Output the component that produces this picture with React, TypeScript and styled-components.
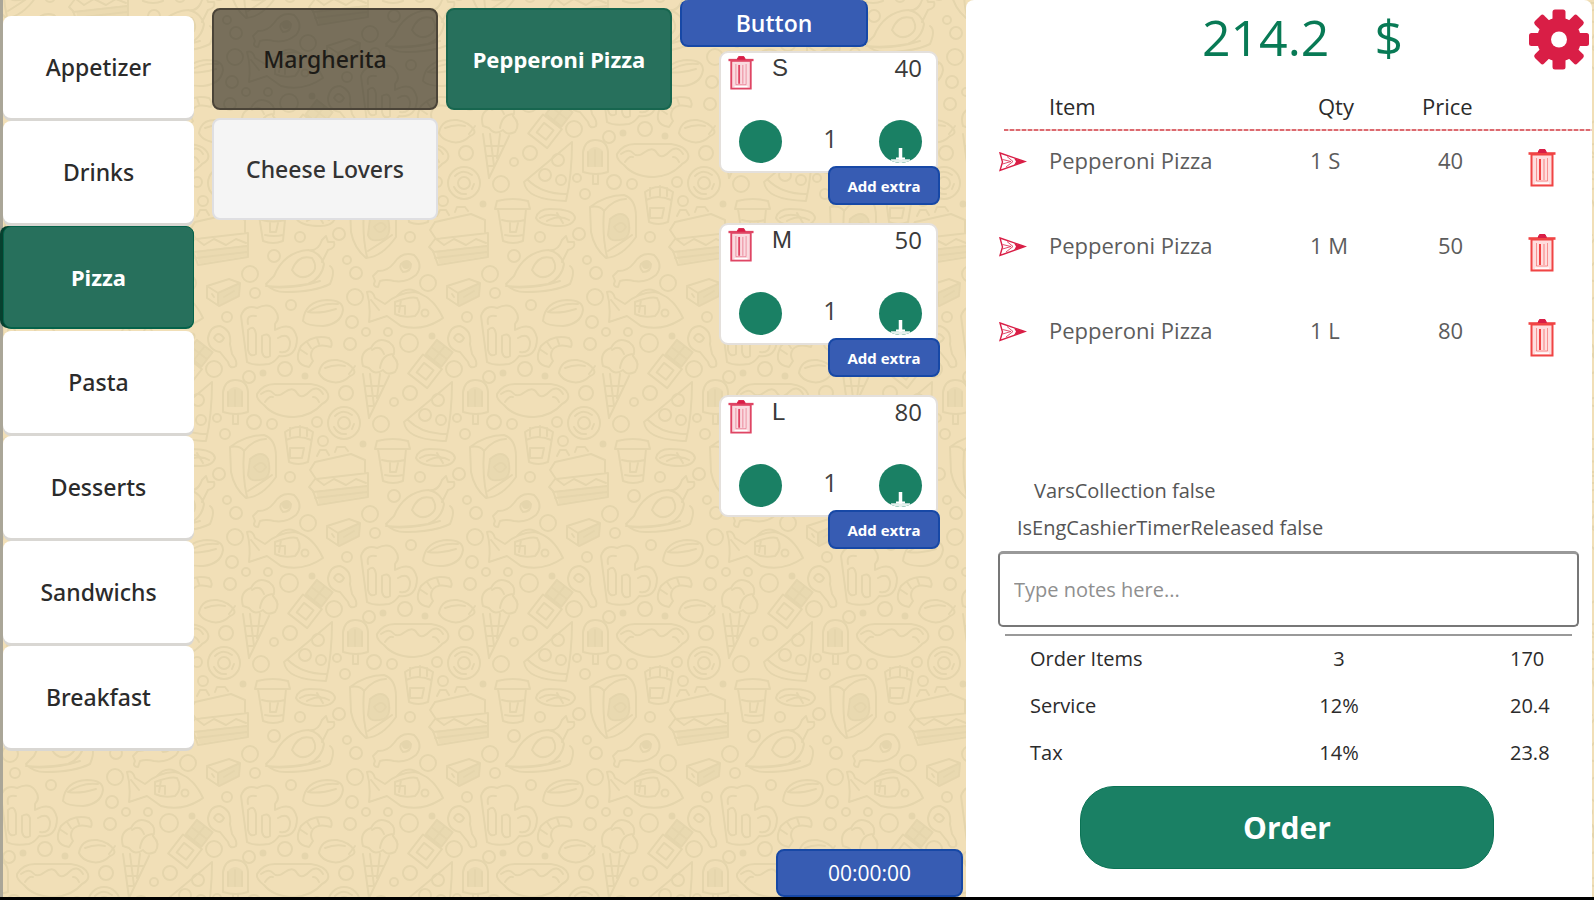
import React, { useState } from "react";
import styled, { createGlobalStyle, css } from "styled-components";

const sans = `"Open Sans", "Noto Sans", sans-serif`;
const menuFont = `"Noto Sans", "Open Sans", sans-serif`;

const colors = {
  sand: "#f1dfb7",
  doodle: "#e5d5ac",
  green: "#1a8064",
  greenDark: "#27705c",
  greenEdge: "#04624a",
  blue: "#375cb3",
  blueEdge: "#1748a6",
  crimson: "#d91e46",
  red: "#f04444",
  text: "#2b2b2b",
};

const GlobalStyle = createGlobalStyle`
  * { box-sizing: border-box; }
  body { margin: 0; background: #000; font-family: ${sans}; color: ${colors.text}; }
  button, input { font-family: inherit; }
  button { cursor: pointer; border: 0; padding: 0; }
`;

const Screen = styled.div`
  position: relative;
  display: grid;
  grid-template-columns: minmax(0, 963fr) minmax(0, 626fr);
  min-height: calc(100vh - 3px);
  padding: 0 2px 0 3px;
  background: linear-gradient(90deg, #aaa698 3px, ${colors.sand} 3px);
  overflow: hidden;
`;

const Backdrop = styled.svg`
  position: absolute;
  inset: 0;
  width: 100%;
  height: 100%;
  pointer-events: none;
`;

const Workspace = styled.div`
  position: relative;
  display: grid;
  grid-template-columns: 191px minmax(0, 1fr) 286px;
`;

const CategoryList = styled.nav`
  display: flex;
  flex-direction: column;
  gap: 3px;
  padding-top: 16px;
  font-family: ${menuFont};
`;

const CategoryButton = styled.button<{ $active: boolean }>`
  height: 102px;
  border-radius: 8px;
  background: #fff;
  box-shadow: 0 3px 0 #d9d7d3;
  color: ${colors.text};
  font-size: 23px;
  font-weight: 500;
  ${(p) =>
    p.$active &&
    css`
      background: ${colors.greenDark};
      border: 1px solid ${colors.greenEdge};
      box-shadow: -3px 0 0 #07402f, 0 1px 0 ${colors.greenEdge};
      color: #fff;
      font-size: 22px;
      font-weight: 700;
    `}
`;

const ProductGrid = styled.div`
  display: grid;
  grid-template-columns: 1fr 1fr;
  grid-auto-rows: 102px;
  gap: 8px;
  padding: 8px 8px 0 18px;
  font-family: ${menuFont};
`;

const ProductButton = styled.button<{ $look: "dim" | "active" | "plain" }>`
  border-radius: 8px;
  font-size: 23px;
  font-weight: 500;
  color: #333;
  background: #f5f5f5;
  border: 2px solid #dfdfe2;
  ${(p) =>
    p.$look === "dim" &&
    css`
      color: #1d1b17;
      background: rgba(0, 0, 0, 0.5);
      border-color: #4b4438;
    `}
  ${(p) =>
    p.$look === "active" &&
    css`
      color: #fff;
      font-size: 22px;
      font-weight: 700;
      background: ${colors.greenDark};
      border-color: #17664f;
    `}
`;

const VariantColumn = styled.section`
  display: flex;
  flex-direction: column;
  align-items: flex-start;
`;

const BlueButton = styled.button`
  border-radius: 8px;
  background: ${colors.blue};
  border: 2px solid ${colors.blueEdge};
  color: #fff;
  font-weight: 700;
`;

const TopButton = styled(BlueButton)`
  width: 188px;
  height: 47px;
  border-top: 0;
  font-size: 23px;
  font-weight: 600;
`;

const TimerButton = styled(BlueButton)`
  align-self: flex-end;
  width: 187px;
  height: 48px;
  margin: auto 3px 0 0;
  font-size: 21px;
  font-weight: 400;
`;

const VariantList = styled.div`
  display: flex;
  flex-direction: column;
  align-self: stretch;
  gap: 50px;
  margin: 4px 28px 0 39px;
`;

const VariantCard = styled.article`
  position: relative;
  display: flex;
  flex-direction: column;
  justify-content: space-between;
  height: 122px;
  padding: 3px 14px 8px 7px;
  border: 2px solid #e4e0dc;
  border-radius: 9px;
  background: #fff;
`;

const VariantHead = styled.div`
  display: flex;
  align-items: flex-start;
  font-size: 24px;
  line-height: 24px;
  color: #3a3a3a;
`;

const SizeName = styled.span`
  flex: 1;
  margin-left: 18px;
  font-family: "Liberation Sans", sans-serif;
`;

const Stepper = styled.div`
  display: flex;
  align-items: center;
  justify-content: space-between;
  padding-left: 11px;
`;

const StepButton = styled.button`
  width: 43px;
  height: 43px;
  border-radius: 50%;
  background: ${colors.green};
  overflow: hidden;
  svg { display: block; }
`;

const Count = styled.span`
  font-size: 25px;
  line-height: 32px;
  padding-bottom: 8px;
  color: #444;
`;

const ExtraButton = styled(BlueButton)`
  position: absolute;
  right: -4px;
  bottom: -34px;
  width: 112px;
  height: 39px;
  font-size: 15px;
`;

const IconButton = styled.button`
  display: inline-flex;
  background: none;
`;

const OrderPanel = styled.aside`
  position: relative;
  display: flex;
  flex-direction: column;
  border-radius: 8px 8px 0 0;
  background: #fff;
`;

const TotalBar = styled.header`
  display: flex;
  align-items: center;
  justify-content: flex-end;
  height: 78px;
  padding-right: 3px;
  color: #087a55;
  font-size: 50px;
  font-weight: 500;
  line-height: 64px;
`;

const Total = styled.div`
  display: flex;
  gap: 45px;
  margin: 0 126px 5px 0;
`;

const ItemTable = styled.table`
  width: calc(100% - 33px);
  margin-left: 33px;
  border-collapse: collapse;
  table-layout: fixed;
  font-size: 22px;
  line-height: 28px;

  th { padding: 0; font-weight: 500; text-align: left; vertical-align: top; }
  td { padding: 0; vertical-align: top; height: 85px; color: #5c5c5c; }
  thead tr {
    height: 53px;
    background: repeating-linear-gradient(90deg, #dd6a70 0 4px, #efc6c6 4px 6px) 5px 100% / 100% 2px no-repeat;
  }
  thead th { padding-top: 14px; color: ${colors.text}; }
  tbody td { padding-top: 15px; }
`;

const Col = styled.col<{ $w?: string }>`
  width: ${(p) => p.$w ?? "auto"};
`;

const QtyHead = styled.th`
  && { padding-left: 8px; }
`;

const PriceCell = styled.td`
  && { padding-left: 16px; }
`;

const IconCell = styled.td`
  && { padding-top: 18px; }
`;

const Flags = styled.div`
  margin-top: auto;
  font-size: 20px;
  line-height: 37px;
  color: #555;
`;

const Flag = styled.p<{ $indent: number }>`
  margin: 0;
  padding-left: ${(p) => p.$indent}px;
`;

const Notes = styled.input`
  display: block;
  height: 76px;
  margin: 5px 13px 0 32px;
  padding: 0 14px;
  border: 2px solid #777;
  border-top: 3px solid #999;
  border-radius: 5px;
  background: #fff;
  font-size: 20px;
  color: ${colors.text};
  &::placeholder { color: #8f8f8f; opacity: 1; }
`;

const Summary = styled.table`
  margin: 7px 20px 0 39px;
  width: calc(100% - 59px);
  border-top: 2px solid #999;
  border-collapse: collapse;
  table-layout: fixed;
  font-size: 20px;
  font-weight: 500;
  line-height: 28px;
  color: #2b2b2b;

  th, td { height: 47px; padding: 0; font-weight: inherit; text-align: left; }
  th { padding-left: 25px; }
  td:nth-child(2) { text-align: center; }
`;

const OrderButton = styled.button`
  align-self: center;
  width: 66%;
  height: 83px;
  margin: 10px 0 28px 16px;
  border-radius: 34px;
  background: ${colors.green};
  border: 1px solid #0b7355;
  color: #fff;
  font-size: 30px;
  font-weight: 700;
`;

const TrashIcon = ({ color, fill, width, height }: { color: string; fill: string; width: number; height: number }) => (
  <svg width={width} height={height} viewBox="0 0 28 38" preserveAspectRatio="none" aria-hidden="true">
    <path d="M3.5 5.5H24.5V36.5H3.5Z" fill={fill} stroke={color} strokeWidth="2" />
    <path d="M0.5 4.5H27.5" stroke={color} strokeWidth="2.6" />
    <path d="M10 3.5L11.5 0.5H17L18.5 3.5Z" fill={colors.crimson} stroke={colors.crimson} />
    <path d="M8.5 9V32H19.5V9" fill="none" stroke={color} strokeWidth="1" opacity="0.5" />
    <path d="M12 10V31" stroke={color} strokeWidth="2" />
    <path d="M16 10V31" stroke={color} strokeWidth="1" opacity="0.6" />
    <path d="M7 34.2H21" stroke="#fff" strokeWidth="1.4" />
  </svg>
);

const ArrowIcon = () => (
  <svg width="28" height="20" viewBox="0 0 28 20" aria-hidden="true">
    <path d="M1 1L26 9.5L1 18.5L3.5 10Z" fill="#fff" stroke={colors.crimson} strokeWidth="1.4" />
    <path d="M3.5 7.5L12 9.5L3.5 12M8 4.5L14 9.5L7 15" fill="none" stroke={colors.crimson} strokeWidth="1" opacity="0.8" />
    <path d="M15 6.3L26 9.5L15 13.2L17 9.5Z" fill={colors.crimson} />
  </svg>
);

const GearIcon = () => (
  <svg width="60" height="61" viewBox="-30 -30.5 60 61" aria-hidden="true">
    <g fill={colors.crimson}>
      {[0, 45, 90, 135].map((a) => (
        <rect key={a} x="-6.5" y="-30" width="13" height="60" rx="2.5" transform={`rotate(${a})`} />
      ))}
      <circle r="22" />
    </g>
    <circle r="8" fill="#fff" />
  </svg>
);

const PlusGlyph = () => (
  <svg width="43" height="43" viewBox="0 0 43 43" aria-hidden="true">
    <path d="M21.5 28V43" stroke="#fff" strokeWidth="3.5" />
    <path d="M12 41H31" stroke="#e6f1ee" strokeWidth="3.5" />
    <path d="M17 38.5H26" stroke="#fff" strokeWidth="2" />
  </svg>
);

const rings: [number, number, number][] = [
  [50, 54, 8], [155, 77, 8], [228, 63, 8], [156, 53, 6], [55, 73, 5], [91, 85, 5], [27, 97, 5],
  [152, 102, 6], [14, 149, 8], [85, 149, 7], [49, 157, 6], [146, 173, 7], [209, 123, 9], [210, 173, 7],
  [181, 204, 8], [54, 202, 7], [72, 204, 5], [25, 214, 5], [17, 198, 4], [117, 202, 5], [123, 221, 5],
  [194, 182, 4], [100, 17, 5], [139, 14, 6], [210, 17, 5], [74, 36, 6], [147, 40, 4], [150, 124, 6],
  [166, 112, 4], [188, 112, 4],
];
const dots: [number, number][] = [[63, 153], [105, 156], [163, 224], [232, 116]];

const Doodles = () => (
  <g>
    {rings.map(([x, y, r]) => <circle key={`${x}-${y}`} cx={x} cy={y} r={r} />)}
    {dots.map(([x, y]) => <circle key={`${x}-${y}`} cx={x} cy={y} r="2.5" fill={colors.doodle} />)}
    {/* layered sandwich */}
    <g transform="translate(21 22)">
      <path d="M-26 -20l36 -8 14 6v12M-26 -20l-5 8 6 9 52 -6v24l-50 8 -5 -14 -4 -4 6 -8M-25 -3l8 6 10 -6 12 6 10 -6 10 4M-28 10l54 -6M-26 16l52 -6M-24 -26l3 -6 6 0 3 5M-6 -30l2 -5 8 0 3 4" />
      <path d="M-25 9l51 -6v11l-48 8z" fill={colors.doodle} stroke="none" opacity="0.5" />
    </g>
    {/* paper cup */}
    <g transform="translate(72 1)">
      <path d="M-15 -20q16 -4 31 0l2 8h-35zM-14 -12l5 32q10 4 20 0l3 -32M-10 -1q11 3 23 0M-7 14q9 2 18 0M-2 2v9h6l2 -9" />
    </g>
    <g transform="translate(115 -2)">
      <path d="M-19 0q2 -9 14 -9q24 0 25 9q-2 8 -15 8q-20 0 -24 -8zM-15 0q10 -6 20 -1M-8 3q12 -7 22 -1M2 -5l6 10" />
    </g>
    {/* bread bag */}
    <g transform="translate(172 7)">
      <path d="M-22 -20q16 -12 34 -12q12 4 12 22v20q-14 20 -30 21q-12 -10 -15 -26zM-22 -20q10 -2 14 4q-2 24 3 46M-8 -16q10 -12 22 -12M-2 -8q12 -10 18 0q4 16 -4 20q-14 4 -16 -4zM2 0q8 -8 12 0q-6 10 -12 0M-4 24q16 -10 24 -16" />
      <path d="M-2 -8q12 -10 18 0q4 16 -4 20q-14 4 -16 -4z" fill={colors.doodle} stroke="none" opacity="0.6" />
    </g>
    {/* fries */}
    <g transform="translate(218 -16)">
      <path d="M-13 -12q14 -10 28 0l-5 30q-10 4 -19 0zM-12 -4q12 -6 25 0M-8 4h14l-2 10h-12zM-8 -16v8M2 -18v10M9 -16v8" />
    </g>
    {/* roast turkey */}
    <g transform="translate(100 48)">
      <path d="M-34 16q6 8 20 8q28 0 44 -8q6 -14 0 -18M-34 16l8 -8q10 -24 34 -26q12 2 16 14q-2 14 -16 20q-22 4 -42 2M8 -18q10 2 14 -10l4 -4 2 6 6 0q2 6 -6 8l-6 12M-8 2q6 -16 20 -12q8 12 -4 18q-10 4 -16 -6zM-30 19q26 2 50 -6" />
    </g>
    {/* drumstick */}
    <g transform="translate(197 48)">
      <path d="M-24 8l5 -5q10 0 16 -8q8 -12 20 -8q10 10 2 20q-10 8 -22 6q-8 -2 -14 0l-2 6q-6 0 -3 -6zM4 -4q6 -6 10 0q0 8 -8 8q-4 -4 -2 -8z" />
      <circle cx="9" cy="-3" r="3" fill={colors.doodle} />
    </g>
    <g transform="translate(23 72)">
      <path d="M-16 -6l22 -7 11 4 -1 13 -20 10 -12 -8zM-16 -6l11 7 22 -10M-5 1l0 12M-11 2l2 3M1 5l10 -6" />
      <path d="M-5 1l22 -10 -1 13 -20 10z" fill={colors.doodle} stroke="none" opacity="0.6" />
    </g>
    {/* fish */}
    <g transform="translate(205 88)">
      <path d="M-38 -16q6 -2 8 6l10 6q14 -12 30 -12q18 4 28 26q-20 14 -42 8l-14 -10 -18 6q2 -16 -2 -30zM-10 -6q16 -6 22 -4q6 10 -2 18q-12 2 -20 -2zM-10 -2h10v8M-4 -8l-2 12M-34 -8l8 10M-8 -12q10 -12 24 -2" />
      <circle cx="20" cy="5" r="3.5" />
    </g>
    <g transform="translate(122 93)">
      <path d="M-19 8q2 -20 24 -21q16 0 16 10q-2 14 -20 16q-16 0 -20 -5zM-14 -1q14 -10 30 -8M-14 -1q12 2 28 -3" />
    </g>
    {/* beer mug */}
    <g transform="translate(68 116)">
      <path d="M-27 -20q4 -12 16 -8q12 -6 18 2q6 8 0 14v6q18 -10 22 8q0 20 -18 18q-4 6 -10 8q-16 2 -22 -2zM-20 -6q6 -6 8 4v20q-6 4 -8 -4zM-6 0q6 -4 8 2v18q-6 4 -8 -4zM10 2q10 -6 12 4q0 12 -10 10M-20 -12q-2 -10 8 -8" />
    </g>
    <g transform="translate(23 128)">
      <path d="M-15 -10q2 -12 12 -12q12 4 10 18l2 10q6 8 4 12q-6 4 -8 -4l-8 -10q-12 -2 -12 -14zM-9 -10q4 -8 10 0q-4 8 -10 0z" />
    </g>
    {/* shrimp */}
    <g transform="translate(115 132)">
      <path d="M-10 14q-12 -4 -4 -20q12 -12 28 -8q4 4 2 9q-12 -4 -18 2q-4 6 0 12l-4 6zM-14 -2l6 4M-8 -10l4 6M2 -14l2 6" />
    </g>
    <g transform="translate(137 151)">
      <path d="M-18 2q2 -14 18 -13q12 2 17 10q2 4 -4 6q-8 8 -18 6q-10 -2 -13 -9zM-12 -3q10 -4 20 -2M12 3l6 -8" />
    </g>
    {/* ice cream cone */}
    <g transform="translate(180 158)">
      <path d="M-17 -12q-4 -14 8 -18q6 -12 18 -6q8 6 4 14q8 8 2 16q-8 4 -12 -2q-8 6 -14 -2zM-8 -28q8 -6 12 4M0 -10q2 -14 14 -14M-17 -4l6 44 20 -42M-14 8h18M-13 18h12M-12 28h6M-10 -4l4 32M0 -4l-3 24" />
    </g>
    {/* chocolate bar */}
    <g transform="translate(230 145) rotate(38)">
      <path d="M-10 -24h20v18h-20zM-12 -4h24v24h-24zM-10 -15h20M0 -24v18M-6 2h12v12h-12z" />
      <path d="M-10 -24h20v18h-20z" fill={colors.doodle} stroke="none" opacity="0.6" />
    </g>
    {/* popsicle */}
    <g transform="translate(35 178)">
      <path d="M-12 14v-20q2 -12 12 -12q12 0 13 12v20q-12 4 -25 0zM-2 16v10h5v-10M-7 8v-14M0 8v-16M7 8v-14" />
      <path d="M-7 9v-16q7 -8 15 0v16z" fill={colors.doodle} stroke="none" opacity="0.6" />
    </g>
    {/* hot dog */}
    <g transform="translate(93 180)">
      <path d="M-36 -6q6 -10 18 -10h36q14 2 17 10q2 6 -6 10q-10 12 -28 13q-20 0 -30 -12q-8 -6 -7 -11zM-32 -6q8 -6 12 -1t12 -1t12 1t12 -1t14 2M-28 2q4 -6 8 -5M26 2q-2 -5 -6 -5" />
    </g>
    {/* pizza slice */}
    <g transform="translate(230 192)">
      <path d="M22 -30l-48 40q2 18 42 19q6 -26 6 -59zM-22 8q14 14 38 14" />
      <circle cx="8" cy="-12" r="6" />
      <circle cx="-5" cy="3" r="6" />
      <circle cx="11" cy="8" r="5" />
    </g>
    <g transform="translate(144 203)">
      <circle r="16" />
      <circle r="6" />
      <path d="M-9 -7q8 -8 17 -1M-10 4q4 8 12 7M10 1l-2 5" />
    </g>
  </g>
);

const FoodPattern = () => (
  <Backdrop aria-hidden="true">
    <defs>
      <g id="doodles" fill="none" stroke={colors.doodle} strokeWidth="2" strokeLinejoin="round" strokeLinecap="round">
        <Doodles />
      </g>
      <pattern id="food" x="200" y="220" width="240" height="480" patternUnits="userSpaceOnUse">
        {[-240, 0, 240].map((x) => [0, 480].map((y) => <use key={`${x}-${y}`} href="#doodles" x={x} y={y} />))}
        {[-120, 120].map((x) => [-240, 240].map((y) => <use key={`${x}-${y}`} href="#doodles" x={x} y={y} />))}
      </pattern>
    </defs>
    <rect x="3" width="100%" height="100%" fill="url(#food)" />
  </Backdrop>
);

const categories = ["Appetizer", "Drinks", "Pizza", "Pasta", "Desserts", "Sandwichs", "Breakfast"];
const products = [
  { name: "Margherita", look: "dim" },
  { name: "Pepperoni Pizza", look: "active" },
  { name: "Cheese Lovers", look: "plain" },
] as const;
const variants = [
  { size: "S", price: 40 },
  { size: "M", price: 50 },
  { size: "L", price: 80 },
];
const summary = [
  ["Order Items", "3", "170"],
  ["Service", "12%", "20.4"],
  ["Tax", "14%", "23.8"],
];

export default function App() {
  const [category, setCategory] = useState("Pizza");
  return (
    <>
      <GlobalStyle />
      <Screen>
        <FoodPattern />
        <Workspace>
          <CategoryList aria-label="Categories">
            {categories.map((c) => (
              <CategoryButton key={c} $active={c === category} onClick={() => setCategory(c)}>{c}</CategoryButton>
            ))}
          </CategoryList>
          <ProductGrid>
            {products.map((p) => <ProductButton key={p.name} $look={p.look}>{p.name}</ProductButton>)}
          </ProductGrid>
          <VariantColumn>
            <TopButton>Button</TopButton>
            <VariantList>
              {variants.map((v) => (
                <VariantCard key={v.size}>
                  <VariantHead>
                    <IconButton aria-label={`Remove ${v.size}`}>
                      <TrashIcon color="#df4564" fill="#fadadf" width={26} height={34} />
                    </IconButton>
                    <SizeName>{v.size}</SizeName>
                    <span>{v.price}</span>
                  </VariantHead>
                  <Stepper>
                    <StepButton aria-label="Decrease" />
                    <Count>1</Count>
                    <StepButton aria-label="Increase"><PlusGlyph /></StepButton>
                  </Stepper>
                  <ExtraButton>Add extra</ExtraButton>
                </VariantCard>
              ))}
            </VariantList>
            <TimerButton>00:00:00</TimerButton>
          </VariantColumn>
        </Workspace>

        <OrderPanel>
          <TotalBar>
            <Total><span>214.2</span><span>$</span></Total>
            <IconButton aria-label="Settings"><GearIcon /></IconButton>
          </TotalBar>
          <ItemTable>
            <colgroup>
              <Col $w="50px" /><Col /><Col $w="112px" /><Col $w="106px" /><Col $w="64px" />
            </colgroup>
            <thead>
              <tr>
                <th aria-label="Marker" /><th>Item</th><QtyHead>Qty</QtyHead><th>Price</th><th aria-label="Remove" />
              </tr>
            </thead>
            <tbody>
              {variants.map((v) => (
                <tr key={v.size}>
                  <IconCell><ArrowIcon /></IconCell>
                  <td>Pepperoni Pizza</td>
                  <td>1 {v.size}</td>
                  <PriceCell>{v.price}</PriceCell>
                  <IconCell>
                    <IconButton aria-label={`Delete Pepperoni Pizza ${v.size}`}>
                      <TrashIcon color={colors.red} fill="#ffdede" width={28} height={38} />
                    </IconButton>
                  </IconCell>
                </tr>
              ))}
            </tbody>
          </ItemTable>
          <Flags>
            <Flag $indent={68}>VarsCollection false</Flag>
            <Flag $indent={51}>IsEngCashierTimerReleased false</Flag>
          </Flags>
          <Notes placeholder="Type notes here..." aria-label="Notes" />
          <Summary>
            <colgroup><Col /><Col $w="126px" /><Col $w="108px" /><Col $w="62px" /></colgroup>
            <tbody>
              {summary.map(([label, amount, value]) => (
                <tr key={label}><th scope="row">{label}</th><td>{amount}</td><td /><td>{value}</td></tr>
              ))}
            </tbody>
          </Summary>
          <OrderButton>Order</OrderButton>
        </OrderPanel>
      </Screen>
    </>
  );
}
